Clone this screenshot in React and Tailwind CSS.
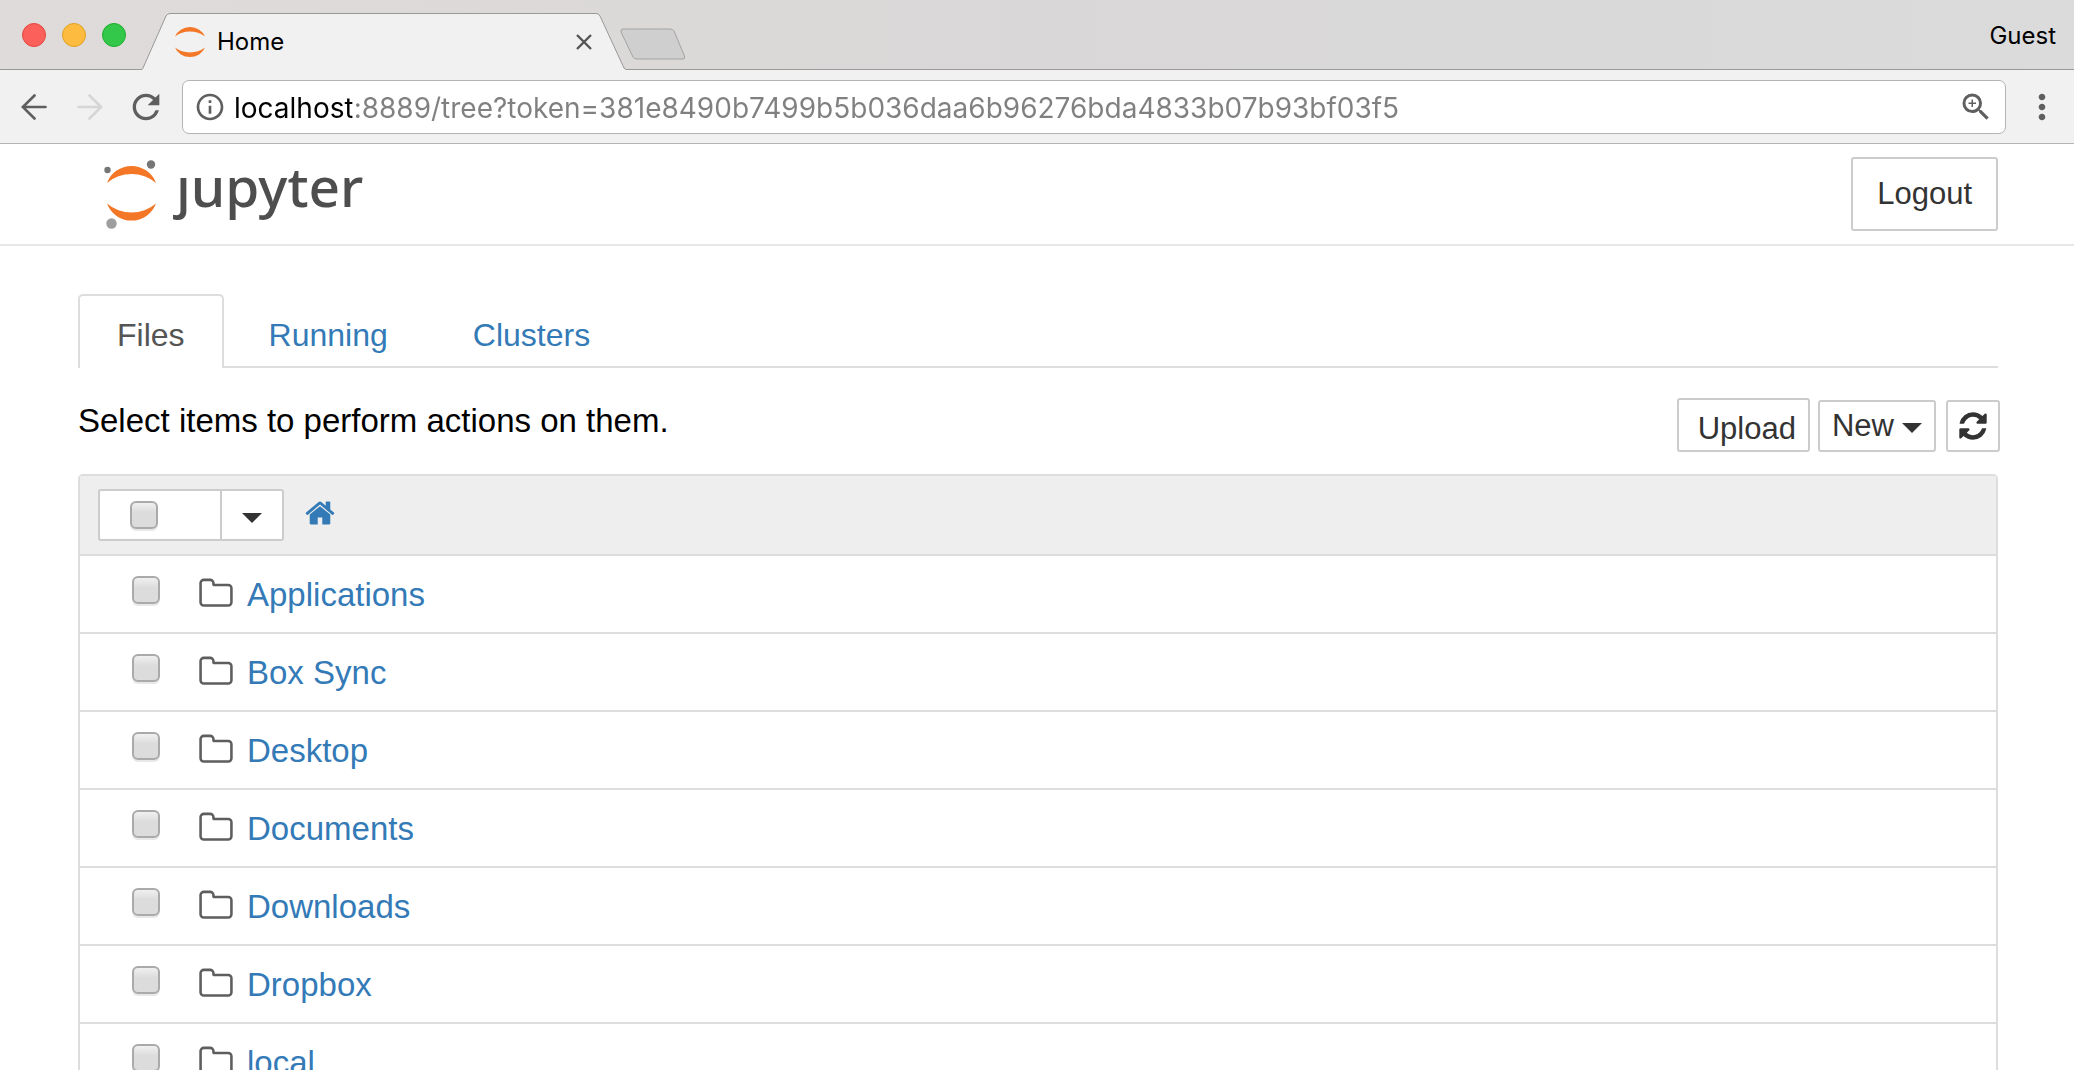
import { useState } from 'react';
import { MdRefresh, MdInfoOutline, MdZoomIn, MdMoreVert } from 'react-icons/md';

const folders = ['Applications', 'Box Sync', 'Desktop', 'Documents', 'Downloads', 'Dropbox', 'local'];

const tabs = ['Files', 'Running', 'Clusters'];

const Arcs = () => (
  <>
    <path d="M107 183A26.1 26.1 0 0 1 156 183A37.8 37.8 0 0 0 107 183Z" fill="#f37726" />
    <path d="M107 203.500A26.1 26.1 0 0 0 156 203.500A37.8 37.8 0 0 1 107 203.500Z" fill="#f37726" />
  </>
);

const FolderIcon = () => (
  <svg viewBox="0 0 1792 1792" className="size-9 shrink-0" fill="#5e5e5e" aria-hidden="true">
    <path d="M1600 1312v-704q0-40-28-68t-68-28h-704q-40 0-68-28t-28-68v-64q0-40-28-68t-68-28h-320q-40 0-68 28t-28 68v960q0 40 28 68t68 28h1216q40 0 68-28t28-68zm128-704v704q0 92-66 158t-158 66h-1216q-92 0-158-66t-66-158v-960q0-92 66-158t158-66h320q92 0 158 66t66 158v32h672q92 0 158 66t66 158z" />
  </svg>
);

const HomeIcon = () => (
  <svg viewBox="0 0 1792 1792" className="size-8" fill="currentColor" aria-hidden="true">
    <path d="M1472 992v480q0 26-19 45t-45 19h-384v-384h-256v384h-384q-26 0-45-19t-19-45v-480q0-1 .5-3t.5-3l575-474 575 474q1 2 1 6zm223-69l-62 74q-8 9-21 11h-3q-13 0-21-7l-692-577-692 577q-12 8-24 7-13-2-21-11l-62-74q-8-10-7-23.500t11-21.500l719-599q32-26 76-26t76 26l244 204v-195q0-14 9-23t23-9h192q14 0 23 9t9 23v408l219 182q10 8 11 21.500t-7 23.500z" />
  </svg>
);

const RefreshIcon = () => (
  <svg viewBox="0 0 1792 1792" className="size-8" fill="currentColor" aria-hidden="true">
    <path d="M1639 1056q0 5-1 7-64 268-268 434.500t-478 166.500q-146 0-282.500-55t-243.500-157l-129 129q-19 19-45 19t-45-19-19-45v-448q0-26 19-45t45-19h448q26 0 45 19t19 45-19 45l-137 137q71 66 161 102t187 36q134 0 250-65t186-179q11-17 53-117 8-23 30-23h192q13 0 22.500 9.500t9.500 22.500zm25-800v448q0 26-19 45t-45 19h-448q-26 0-45-19t-19-45 19-45l138-138q-148-137-349-137-134 0-250 65t-186 179q-11 17-53 117-8 23-30 23h-199q-13 0-22.500-9.500t-9.500-22.500v-7q65-268 270-434.500t480-166.500q146 0 284 55.500t245 156.500l130-129q19-19 45-19t45 19 19 45z" />
  </svg>
);

const Caret = () => (
  <svg viewBox="0 0 20 10" className="h-[10px] w-5" fill="currentColor" aria-hidden="true">
    <path d="M0 0H20L10 10Z" />
  </svg>
);

const Checkbox = ({ label, checked, onChange }) => (
  <input
    type="checkbox"
    aria-label={label}
    checked={checked}
    onChange={onChange}
    className="size-7 shrink-0 appearance-none rounded-[6px] border-2 border-[#aaa] bg-linear-to-b from-[#f0f0f0] to-[#dcdcdc] to-40% shadow-[0_2px_0_#e8e8e8] checked:to-[#7aa7d9]"
  />
);

const TitleBar = () => (
  <div className="flex h-[70px] shrink-0 items-end border-b border-[#999] bg-linear-to-r from-[#dfdbda] via-[#d9d7d7] to-[#dbdbdb]">
    <div className="flex gap-4 self-center pl-[22px]">
      <button aria-label="Close window" className="size-6 rounded-full border border-[#e2463f] bg-[#fc605b]" />
      <button aria-label="Minimize window" className="size-6 rounded-full border border-[#dfa023] bg-[#fdbc40]" />
      <button aria-label="Zoom window" className="size-6 rounded-full border border-[#1dad2b] bg-[#34c84a]" />
    </div>
    <div className="relative -mb-px ml-4 flex h-[57px] w-[484px] items-center pr-[34px] pl-[33px]">
      <svg viewBox="0 0 484 57" className="absolute inset-0 size-full" preserveAspectRatio="none" aria-hidden="true">
        <path d="M0 56.500L1 55L24 3Q25.500 .5 28 .5H454Q457 .5 458 3L482 55L484 56.500V57H0Z" fill="#f1f1f1" />
        <path d="M0 56.500L1 55L24 3Q25.500 .5 28 .5H454Q457 .5 458 3L482 55L484 56.500" fill="none" stroke="#999" />
      </svg>
      <svg viewBox="107 165.700 49 55" className="relative size-[30px]" preserveAspectRatio="none" aria-hidden="true">
        <Arcs />
      </svg>
      <span className="relative ml-3 flex-1 text-2xl text-black">Home</span>
      <button aria-label="Close tab" className="relative">
        <svg viewBox="0 0 16 16" className="size-4" stroke="#555" strokeWidth="2.400" aria-hidden="true">
          <path d="M1 1L15 15M15 1L1 15" />
        </svg>
      </button>
    </div>
    <button aria-label="New tab" className="-ml-1.5 self-center pt-5">
      <svg viewBox="0 0 66 33" className="h-[33px] w-[66px]" aria-hidden="true">
        <path d="M3 1H50Q53 1 54 3L64.500 28Q65.500 31 63 31H17Q14 31 13 29L1 4Q.5 1 3 1Z" fill="#cfcfcf" stroke="#a3a3a3" />
      </svg>
    </button>
    <button className="mr-[18px] ml-auto self-center pt-0.5 text-2xl text-black">Guest</button>
  </div>
);

const Toolbar = () => {
  const [url, setUrl] = useState('localhost:8889/tree?token=381e8490b7499b5b036daa6b96276bda4833b07b93bf03f5');

  return (
    <div className="flex h-[74px] shrink-0 items-center gap-4 border-b border-[#b4b4b4] bg-[#f1f1f1] pr-3 pl-3.5 text-[#5f5f5f]">
      <button aria-label="Back" className="flex w-10 justify-center">
        <svg viewBox="0 0 26 26" className="size-[26px]" fill="none" stroke="currentColor" strokeWidth="2.700" strokeLinecap="round" aria-hidden="true">
          <path d="M24.500 13H2M13.500 1.500L1.800 13L13.500 24.500" />
        </svg>
      </button>
      <button aria-label="Forward" className="flex w-10 justify-center text-[#d6d6d6]">
        <svg viewBox="0 0 26 26" className="size-[26px]" fill="none" stroke="currentColor" strokeWidth="2.700" strokeLinecap="round" aria-hidden="true">
          <path d="M1.500 13H24M12.500 1.500L24.200 13L12.500 24.500" />
        </svg>
      </button>
      <button aria-label="Reload">
        <MdRefresh className="size-10" />
      </button>
      <div className="flex h-[54px] flex-1 items-center gap-2 rounded-[7px] border border-[#b4b4b4] bg-white px-[11px]">
        <MdInfoOutline className="size-8" />
        <input
          type="text"
          aria-label="Address"
          value={url}
          onChange={(e) => setUrl(e.target.value)}
          className="min-w-0 flex-1 bg-linear-to-r from-black from-[118px] to-[#808080] to-[118px] bg-clip-text pt-0.5 text-[28px] text-transparent outline-none"
        />
        <button aria-label="Zoom">
          <MdZoomIn className="size-9" />
        </button>
      </div>
      <button aria-label="Menu">
        <MdMoreVert className="size-10" />
      </button>
    </div>
  );
};

const App = () => {
  const [activeTab, setActiveTab] = useState('Files');
  const [selected, setSelected] = useState([]);

  const toggle = (name) => {
    setSelected(selected.includes(name) ? selected.filter((n) => n !== name) : [...selected, name]);
  };

  const toggleAll = () => {
    setSelected(selected.length === folders.length ? [] : folders);
  };

  return (
    <div className="flex h-screen flex-col overflow-hidden bg-white font-[Inter,sans-serif]">
      <TitleBar />
      <Toolbar />
      <div className="min-h-0 flex-1 overflow-hidden font-['Liberation_Sans',sans-serif] text-[33px] text-[#333]">
        <header className="flex h-[102px] items-center justify-between border-b-2 border-[#e7e7e7] pr-[76px] pl-[104px]">
          <a href="#home" aria-label="jupyter" className="flex items-center gap-[18px]">
            <svg viewBox="104 158 54 72" className="h-[72px] w-[54px]" aria-hidden="true">
              <Arcs />
              <circle cx="107.500" cy="170" r="3.200" fill="#767677" />
              <circle cx="151" cy="164.500" r="4.200" fill="#767677" />
              <circle cx="111.500" cy="223.500" r="5.200" fill="#9e9e9e" />
            </svg>
            <span className="pb-4 font-['Noto_Sans',sans-serif] text-[55px] leading-[60px] font-medium text-[#4e4e4e]">ȷupyter</span>
          </a>
          <button className="h-[74px] rounded-[3px] border-2 border-[#ccc] px-6 text-[31px]">Logout</button>
        </header>

        <nav className="mt-12 mr-[76px] ml-[78px] flex gap-[5px] border-b-2 border-[#ddd]">
          {tabs.map((tab) => (
            <button
              key={tab}
              onClick={() => setActiveTab(tab)}
              className={
                tab === activeTab
                  ? '-mb-0.5 h-[74px] rounded-t-[5px] border-2 border-b-0 border-[#ddd] bg-white px-[37px] pt-1.5 text-[32px] text-[#555]'
                  : 'h-[72px] px-10 pt-2.5 text-[32px] text-[#337ab7]'
              }
            >
              {tab}
            </button>
          ))}
        </nav>

        <div className="flex items-end justify-between pt-[30px] pr-[74px] pb-[22px] pl-[78px]">
          <p className="pb-2 leading-[46px] text-black">Select items to perform actions on them.</p>
          <div className="flex items-end text-[31px]">
            <button className="h-[54px] rounded-[3px] border-2 border-[#ccc] pt-2 pr-3 pl-[19px] leading-10">Upload</button>
            <button className="ml-2 flex h-[52px] items-center gap-2 rounded-[3px] border-2 border-[#ccc] px-3 leading-10">
              New
              <span className="pt-1">
                <Caret />
              </span>
            </button>
            <button aria-label="Refresh" className="ml-[10px] flex h-[52px] w-[54px] items-center justify-center rounded-[3px] border-2 border-[#ccc]">
              <RefreshIcon />
            </button>
          </div>
        </div>

        <div className="mr-[76px] ml-[78px] rounded-t-[5px] border-2 border-[#ddd]">
          <div className="flex h-[78px] items-center bg-[#eee] pl-[18px]">
            <div className="flex h-[52px] rounded-[3px] border-2 border-[#ccc] bg-white">
              <div className="flex w-[122px] items-center border-r-2 border-[#ccc] pl-[30px]">
                <Checkbox label="Select all" checked={selected.length === folders.length} onChange={toggleAll} />
              </div>
              <button aria-label="Select by type" className="flex w-[60px] items-center justify-center pt-1.5">
                <Caret />
              </button>
            </div>
            <a href="#home" aria-label="Home folder" className="ml-5 pb-1 text-[#337ab7]">
              <HomeIcon />
            </a>
          </div>
          <ul>
            {folders.map((name) => (
              <li key={name} className="flex h-[78px] items-center border-t-2 border-[#ddd] pl-[52px]">
                <div className="mr-[38px] mb-2 flex">
                  <Checkbox label={name} checked={selected.includes(name)} onChange={() => toggle(name)} />
                </div>
                <FolderIcon />
                <a href="#folder" className="ml-[13px] pt-0.5 text-[#337ab7]">
                  {name}
                </a>
              </li>
            ))}
          </ul>
        </div>
      </div>
    </div>
  );
};

export default App;
